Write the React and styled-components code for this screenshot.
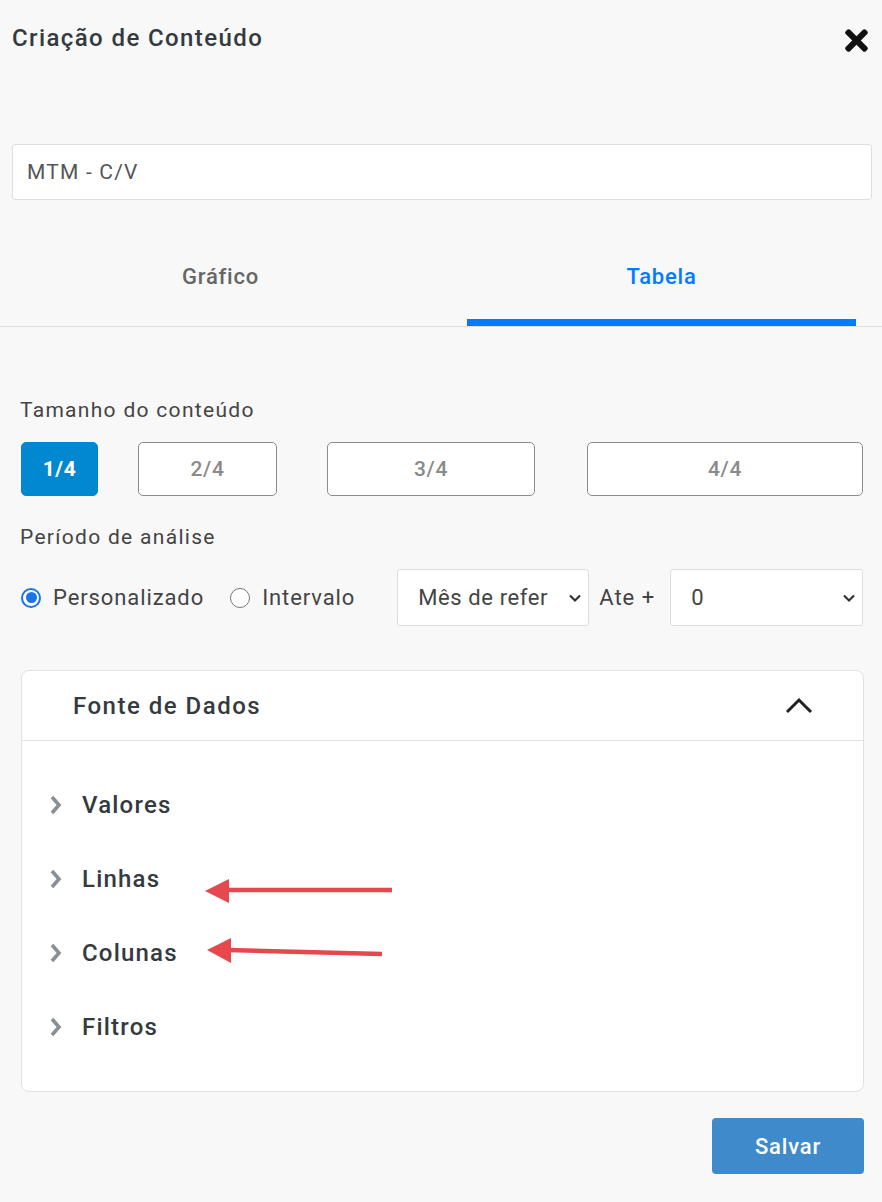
import React from "react";
import styled, { createGlobalStyle } from "styled-components";
import { FaTimes } from "react-icons/fa";

const GlobalStyle = createGlobalStyle`
  html, body { margin: 0; padding: 0; background: #f8f8f8; }
  body { font-family: Roboto, "Liberation Sans", sans-serif; color: #343a40; }
  * { box-sizing: border-box; }
`;

const Page = styled.div`
  width: 882px;
  min-height: 1202px;
  background: #f8f8f8;
  position: relative;
`;

const Header = styled.div`
  display: flex;
  align-items: center;
  justify-content: space-between;
  padding: 24px 9px 0 12px;
  height: 52px;
`;

const Title = styled.h1`
  margin: 0;
  font-size: 24px;
  line-height: 28px;
  font-weight: 500;
  letter-spacing: 1.4px;
  color: #343a40;
`;

const CloseButton = styled.button`
  border: 0;
  background: transparent;
  padding: 0;
  margin-top: 5px;
  color: #111;
  display: flex;
  align-items: center;
  cursor: pointer;
`;

const NameInput = styled.div`
  margin: 92px 10px 0 12px;
  height: 56px;
  background: #fff;
  border: 1px solid #dcdee2;
  border-radius: 3px;
  display: flex;
  align-items: center;
  padding-left: 14px;
  font-size: 21px;
  letter-spacing: 1.2px;
  color: #555;
`;

const Tabs = styled.div`
  display: flex;
  margin-top: 26px;
  border-bottom: 1px solid #dedede;
`;

const Tab = styled.div`
  flex: 1;
  height: 100px;
  display: flex;
  align-items: center;
  justify-content: center;
  font-size: 22px;
  font-weight: 500;
  letter-spacing: 0.8px;
  color: ${(p) => (p.$active ? "#007bff" : "#666")};
  position: relative;
  &::after {
    content: "";
    display: ${(p) => (p.$active ? "block" : "none")};
    position: absolute;
    left: 26px;
    right: 26px;
    bottom: 0;
    height: 7px;
    background: #007bff;
  }
`;

const Body = styled.div`
  padding: 0 18px 0 20px;
`;

const Label = styled.div`
  font-size: 21px;
  line-height: 28px;
  letter-spacing: 1.3px;
  color: #444;
  margin-top: ${(p) => p.$mt}px;
`;

const SizeRow = styled.div`
  display: grid;
  grid-template-columns: 117px 189px 260px 276px;
  margin-top: 18px;
  padding-left: 1px;
`;

const SizeButton = styled.div`
  width: ${(p) => p.$w}px;
  height: 54px;
  border-radius: 5px;
  display: flex;
  align-items: center;
  justify-content: center;
  font-size: 21px;
  letter-spacing: 0.6px;
  font-weight: ${(p) => (p.$active ? 700 : 500)};
  color: ${(p) => (p.$active ? "#fff" : "#8a8a8a")};
  background: ${(p) => (p.$active ? "#0288d1" : "#fff")};
  border: 1px solid ${(p) => (p.$active ? "#0288d1" : "#8c8c8c")};
`;

const PeriodRow = styled.div`
  display: flex;
  align-items: center;
  margin-top: 18px;
  height: 57px;
  white-space: nowrap;
`;

const RadioOption = styled.label`
  display: flex;
  align-items: center;
  flex-shrink: 0;
  font-size: 22px;
  letter-spacing: 0.9px;
  color: #444;
  margin-right: ${(p) => p.$mr}px;
`;

const RadioDot = styled.span`
  width: 20px;
  height: 20px;
  border-radius: 50%;
  margin: 0 12px 0 1px;
  border: ${(p) => (p.$checked ? "2px solid #1a73e8" : "1.5px solid #767676")};
  background: #fff;
  display: flex;
  align-items: center;
  justify-content: center;
  &::after {
    content: "";
    display: ${(p) => (p.$checked ? "block" : "none")};
    width: 11px;
    height: 11px;
    border-radius: 50%;
    background: #1a73e8;
  }
`;

const SelectBox = styled.div`
  width: ${(p) => p.$w}px;
  flex-shrink: 0;
  height: 57px;
  background: #fff;
  border: 1px solid #dcdee2;
  border-radius: 3px;
  display: flex;
  align-items: center;
  justify-content: space-between;
  padding: 0 6px 0 20px;
  font-size: 22px;
  letter-spacing: 0.6px;
  color: #444;
`;

const AteText = styled.span`
  flex-shrink: 0;
  font-size: 22px;
  letter-spacing: 1px;
  color: #444;
  margin: 0 15px 0 10px;
`;

const Card = styled.div`
  margin-top: 44px;
  margin-left: 1px;
  background: #fff;
  border: 1px solid #dde2e6;
  border-radius: 8px;
`;

const CardHeader = styled.div`
  height: 70px;
  display: flex;
  align-items: center;
  justify-content: space-between;
  padding: 0 50px 0 51px;
  border-bottom: 1px solid #dde2e6;
  font-size: 24px;
  font-weight: 500;
  letter-spacing: 1.5px;
  color: #343a40;
`;

const CardBody = styled.div`
  padding: 27px 0 27px 27px;
  position: relative;
`;

const Item = styled.div`
  height: 74px;
  display: flex;
  align-items: center;
  font-size: 24px;
  font-weight: 500;
  letter-spacing: 1.2px;
  color: #343a40;
  gap: 19px;
`;

const Footer = styled.div`
  display: flex;
  justify-content: flex-end;
  margin-top: 26px;
`;

const SaveButton = styled.button`
  width: 152px;
  height: 56px;
  border: 0;
  border-radius: 4px;
  background: #3f8acb;
  color: #fff;
  font-family: Roboto, sans-serif;
  font-size: 22px;
  font-weight: 500;
  letter-spacing: 0.8px;
`;

const Arrow = styled.svg`
  position: absolute;
  left: 0;
  top: 0;
  pointer-events: none;
`;

const ChevronRight = () => (
  <svg width="14" height="22" viewBox="0 0 14 22">
    <polyline points="3,3 10,11 3,19" fill="none" stroke="#8a8f95" strokeWidth="3.6" strokeLinejoin="miter" />
  </svg>
);

const ChevronDown = ({ size = 14 }) => (
  <svg width={size} height={size} viewBox="0 0 14 14">
    <polyline points="2,4.5 7,9.5 12,4.5" fill="none" stroke="#333" strokeWidth="2.2" />
  </svg>
);

const ChevronUp = () => (
  <svg width="28" height="18" viewBox="0 0 28 18">
    <polyline points="2,15 14,3 26,15" fill="none" stroke="#222" strokeWidth="3" />
  </svg>
);

const items = ["Valores", "Linhas", "Colunas", "Filtros"];

export default function App() {
  return (
    <Page>
      <GlobalStyle />
      <Header>
        <Title>Criação de Conteúdo</Title>
        <CloseButton aria-label="Fechar">
          <FaTimes size={33} />
        </CloseButton>
      </Header>
      <NameInput>MTM - C/V</NameInput>
      <Tabs>
        <Tab>Gráfico</Tab>
        <Tab $active>Tabela</Tab>
      </Tabs>
      <Body>
        <Label $mt={69}>Tamanho do conteúdo</Label>
        <SizeRow>
          <SizeButton $w={77} $active>1/4</SizeButton>
          <SizeButton $w={139}>2/4</SizeButton>
          <SizeButton $w={208}>3/4</SizeButton>
          <SizeButton $w={276}>4/4</SizeButton>
        </SizeRow>
        <Label $mt={27}>Período de análise</Label>
        <PeriodRow>
          <RadioOption $mr={25}>
            <RadioDot $checked />
            Personalizado
          </RadioOption>
          <RadioOption $mr={42}>
            <RadioDot />
            Intervalo
          </RadioOption>
          <SelectBox $w={192}>
            <span>Mês de refer</span>
            <ChevronDown />
          </SelectBox>
          <AteText>Ate +</AteText>
          <SelectBox $w={193}>
            <span>0</span>
            <ChevronDown />
          </SelectBox>
        </PeriodRow>
        <Card>
          <CardHeader>
            <span>Fonte de Dados</span>
            <ChevronUp />
          </CardHeader>
          <CardBody>
            {items.map((it) => (
              <Item key={it}>
                <ChevronRight />
                {it}
              </Item>
            ))}
          </CardBody>
        </Card>
        <Footer>
          <SaveButton>Salvar</SaveButton>
        </Footer>
      </Body>
      <Arrow width="882" height="1202" viewBox="0 0 882 1202">
        <line x1="226" y1="890" x2="392" y2="890" stroke="#e5484d" strokeWidth="4.5" />
        <polygon points="205,891 229,879 229,903" fill="#e5484d" />
        <line x1="228" y1="950" x2="382" y2="954" stroke="#e5484d" strokeWidth="4.5" />
        <polygon points="207,950 231,938 231,963" fill="#e5484d" />
      </Arrow>
    </Page>
  );
}
